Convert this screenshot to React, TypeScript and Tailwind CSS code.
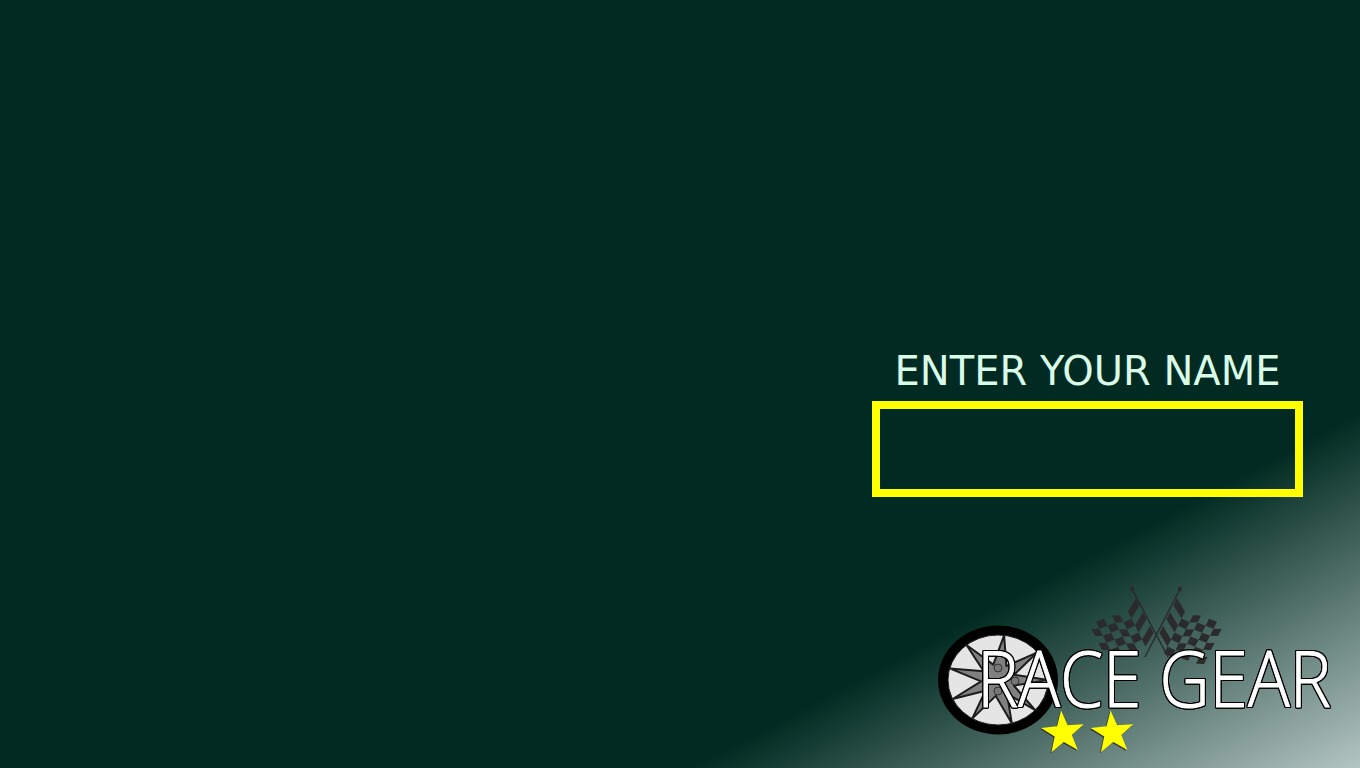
import React from 'react';

// checker cells on a drooping quad, pole side first
function flagCells(mirror: boolean, rows: number) {
  const cells: string[] = [];
  const cols = 6;
  const map = (u: number, v: number): [number, number] => {
    const droop = 14 * Math.sin((Math.min(u / 0.32, 1) * Math.PI) / 2);
    const x = 1177 + 48 * u - 21 * v;
    const y = 598 + 10 * u + 42 * v + droop + Math.sin(u * Math.PI * 3) * 1.5;
    return [mirror ? 2313 - x : x, y];
  };
  for (let r = 0; r < rows; r++) {
    for (let c = 0; c < cols; c++) {
      if ((r + c) % 2) continue;
      const u0 = c / cols;
      const u1 = (c + 1) / cols;
      const v0 = r / 6;
      const v1 = (r + 1) / 6;
      const pts = [map(u0, v0), map(u1, v0), map(u1, v1), map(u0, v1)];
      cells.push(pts.map((p) => p[0].toFixed(1) + ',' + p[1].toFixed(1)).join(' '));
    }
  }
  return cells;
}

function Flags() {
  return (
    <g fill="#2b2b2b">
      <path d="M1132 589 L1168 657" stroke="#2b2b2b" strokeWidth="1.5" />
      <path d="M1180 589 L1145 657" stroke="#2b2b2b" strokeWidth="1.5" />
      <circle cx="1132" cy="589" r="2.2" />
      <circle cx="1180" cy="589" r="2.2" />
      {flagCells(false, 6).map((p, i) => (
        <polygon key={'r' + i} points={p} />
      ))}
      {flagCells(true, 5).map((p, i) => (
        <polygon key={'l' + i} points={p} />
      ))}
    </g>
  );
}

function Wheel() {
  const cx = 998;
  const cy = 680;
  const tips = [-83, -38, 0, 42, 74, 121, 155, 195, 231];
  const star: string[] = [];
  tips.forEach((deg, i) => {
    const a = (deg * Math.PI) / 180;
    star.push((cx + Math.cos(a) * 50).toFixed(1) + ',' + (cy + Math.sin(a) * 45).toFixed(1));
    const next = i === tips.length - 1 ? tips[0] + 360 : tips[i + 1];
    const m = (((deg + next) / 2) * Math.PI) / 180;
    star.push((cx + Math.cos(m) * 17).toFixed(1) + ',' + (cy + Math.sin(m) * 16).toFixed(1));
  });
  return (
    <g>
      <ellipse cx={cx} cy={cy} rx="60" ry="54.5" fill="#000" />
      <ellipse cx={cx} cy={cy} rx="50" ry="45" fill="#e5e5e5" stroke="#222" strokeWidth="1" />
      <polygon points={star.join(' ')} fill="#808080" stroke="#1c1c1c" strokeWidth="2" strokeLinejoin="round" />
      <circle cx="998" cy="668" r="4" fill="#777" stroke="#333" />
      <circle cx="1015" cy="681" r="4" fill="#777" stroke="#333" />
      <circle cx="998" cy="691" r="4" fill="#777" stroke="#333" />
      <circle cx="986" cy="680" r="4" fill="#777" stroke="#333" />
    </g>
  );
}

function Star({ x, y }: { x: number; y: number }) {
  const pts: string[] = [];
  for (let i = 0; i < 10; i++) {
    const r = i % 2 ? 9 : 22.5;
    const a = ((-95 + i * 36) * Math.PI) / 180;
    pts.push((x + Math.cos(a) * r).toFixed(1) + ',' + (y + Math.sin(a) * r).toFixed(1));
  }
  const p = pts.join(' ');
  return (
    <g>
      <polygon points={p} fill="#333" transform="translate(-1 1)" />
      <polygon points={p} fill="#ffff00" />
    </g>
  );
}

function Logo() {
  return (
    <div className="relative w-[400px] h-[170px] mt-[88px] mr-[25px]">
      <svg className="absolute inset-0" width="400" height="170" viewBox="935 585 400 170">
        <Flags />
        <Wheel />
        <Star x={1063} y={733} />
        <Star x={1112.5} y={733} />
      </svg>
      <div
        className="absolute left-[42px] top-[42px] origin-left scale-x-[0.89] whitespace-nowrap font-['Open_Sans',sans-serif] font-light text-[78px] leading-[100px] text-white [-webkit-text-stroke:1px_#fff] [filter:drop-shadow(1px_0_0_#000)_drop-shadow(-1px_0_0_#000)_drop-shadow(0_1px_0_#000)_drop-shadow(0_-1px_0_#000)]"
      >
        RACE GEAR
      </div>
    </div>
  );
}

export default function App() {
  return (
    <div className="h-screen w-full overflow-hidden flex flex-col items-end bg-[linear-gradient(152deg,#012b22_0%,#012b22_76.2%,#b4c5c1_100%)]">
      <div className="mt-[349px] mr-[57px] w-[431px] flex flex-col items-center">
        <div className="font-['DejaVu_Sans',sans-serif] text-[40px] leading-[44px] h-[52px] text-[#d9fbe8] whitespace-nowrap">
          ENTER YOUR NAME
        </div>
        <div className="w-full h-[96px] border-[8px] border-[#ffff00]" />
      </div>
      <Logo />
    </div>
  );
}
